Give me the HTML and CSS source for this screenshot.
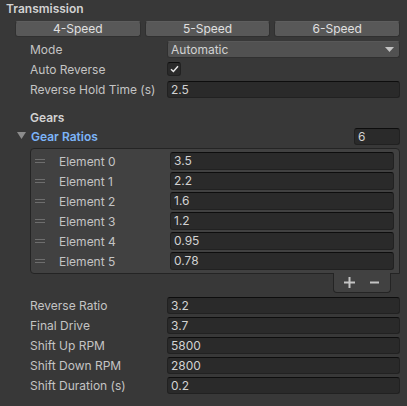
FILE: index.html
```html
<!DOCTYPE html>
<html lang="en">
<head>
    <meta charset="UTF-8">
    <title>Transmission</title>
    <link rel="stylesheet" href="styles.css">
</head>
<body>

<div class="inspector">
    <div class="section-title">Transmission</div>

    <div class="toolbar">
        <button class="tool-btn">4-Speed</button>
        <button class="tool-btn">5-Speed</button>
        <button class="tool-btn">6-Speed</button>
    </div>

    <div class="props-top">
        <div class="prop">
            <span class="label">Mode</span>
            <div class="dropdown">
                <span>Automatic</span>
                <svg class="arrow" width="9" height="5" viewBox="0 0 9 5"><polygon points="0,0 9,0 4.5,5" fill="#c4c4c4"/></svg>
            </div>
        </div>
        <div class="prop">
            <span class="label">Auto Reverse</span>
            <div class="checkbox">
                <svg width="9" height="8" viewBox="0 0 9 8"><polyline points="1,4.2 3.4,6.5 8,1.2" fill="none" stroke="#e6e6e6" stroke-width="1.5"/></svg>
            </div>
        </div>
        <div class="prop">
            <span class="label">Reverse Hold Time (s)</span>
            <div class="field">2.5</div>
        </div>
    </div>

    <div class="sub-title">Gears</div>

    <div class="foldout">
        <svg class="fold-arrow" width="9" height="8" viewBox="0 0 9 8"><polygon points="0,0 9,0 4.5,7" fill="#8c8c8c"/></svg>
        <span class="fold-label">Gear Ratios</span>
        <div class="field size-field">6</div>
    </div>

    <div class="list">
        <div class="list-item"><span class="handle"></span><span class="item-label">Element 0</span><div class="field">3.5</div></div>
        <div class="list-item"><span class="handle"></span><span class="item-label">Element 1</span><div class="field">2.2</div></div>
        <div class="list-item"><span class="handle"></span><span class="item-label">Element 2</span><div class="field">1.6</div></div>
        <div class="list-item"><span class="handle"></span><span class="item-label">Element 3</span><div class="field">1.2</div></div>
        <div class="list-item"><span class="handle"></span><span class="item-label">Element 4</span><div class="field">0.95</div></div>
        <div class="list-item"><span class="handle"></span><span class="item-label">Element 5</span><div class="field">0.78</div></div>
    </div>
    <div class="list-footer">
        <div class="list-footer-box">
            <svg width="11" height="11" viewBox="0 0 11 11"><rect x="0" y="4.5" width="11" height="2" fill="#c4c4c4"/><rect x="4.5" y="0" width="2" height="11" fill="#c4c4c4"/></svg>
            <svg width="9" height="11" viewBox="0 0 9 11"><rect x="0" y="4.5" width="9" height="2" fill="#c4c4c4"/></svg>
        </div>
    </div>

    <div class="props-bottom">
        <div class="prop">
            <span class="label">Reverse Ratio</span>
            <div class="field">3.2</div>
        </div>
        <div class="prop">
            <span class="label">Final Drive</span>
            <div class="field">3.7</div>
        </div>
        <div class="prop">
            <span class="label">Shift Up RPM</span>
            <div class="field">5800</div>
        </div>
        <div class="prop">
            <span class="label">Shift Down RPM</span>
            <div class="field">2800</div>
        </div>
        <div class="prop">
            <span class="label">Shift Duration (s)</span>
            <div class="field">0.2</div>
        </div>
    </div>
</div>

</body>
</html>
```

FILE: styles.css
```css
body {
    margin: 0;
    padding: 0;
    background-color: #383838;
    font-family: Inter, "Noto Sans", sans-serif;
    font-size: 12px;
    color: #c4c4c4;
}
.inspector {
    width: 407px;
}
.section-title {
    height: 18px;
    line-height: 18px;
    padding-left: 6px;
    font-weight: 600;
    color: #d2d2d2;
}
.toolbar {
    display: flex;
    gap: 4px;
    margin-top: 3px;
    padding: 0 7px 0 15px;
}
.tool-btn {
    flex: 1;
    height: 16px;
    padding: 0;
    font-family: inherit;
    font-size: 12px;
    line-height: 14px;
    color: #e0e0e0;
    background-color: #585858;
    border: 1px solid #303030;
    border-top-color: #5e5e5e;
    border-radius: 3px;
}
.props-top {
    margin-top: 2px;
}
.prop {
    display: flex;
    align-items: center;
    height: 20px;
    padding: 0 7px 0 30px;
}
.label {
    width: 137px;
    flex-shrink: 0;
    white-space: nowrap;
}
.field {
    flex: 1;
    box-sizing: border-box;
    height: 17px;
    line-height: 15px;
    padding-left: 3px;
    background-color: #2a2a2a;
    border: 1px solid #212121;
    border-top-color: #0d0d0d;
    border-radius: 3px;
    color: #d2d2d2;
}
.dropdown {
    flex: 1;
    display: flex;
    align-items: center;
    justify-content: space-between;
    box-sizing: border-box;
    height: 17px;
    padding: 0 5px 0 3px;
    background-color: #515151;
    border: 1px solid #303030;
    border-top-color: #585858;
    border-radius: 3px;
    color: #d2d2d2;
}
.checkbox {
    width: 14px;
    height: 14px;
    box-sizing: border-box;
    display: flex;
    align-items: center;
    justify-content: center;
    background-color: #2a2a2a;
    border: 1px solid #212121;
    border-top-color: #0d0d0d;
    border-radius: 3px;
}
.sub-title {
    margin-top: 9px;
    height: 19px;
    line-height: 19px;
    padding-left: 30px;
    font-weight: 600;
    color: #d2d2d2;
}
.foldout {
    display: flex;
    align-items: center;
    height: 18px;
    padding: 0 7px 0 17px;
}
.fold-arrow {
    margin-right: 5px;
}
.fold-label {
    flex: 1;
    color: #7cb4f8;
    font-weight: 600;
}
.size-field {
    flex: none;
    width: 46px;
}
.list {
    margin: 3px 7px 0 30px;
    padding: 2px 5px 2px 0;
    background-color: #414141;
    border: 1px solid #242424;
    border-radius: 4px;
    border-bottom-right-radius: 0;
}
.list-item {
    display: flex;
    align-items: center;
    height: 20px;
}
.handle {
    width: 10px;
    height: 4px;
    margin: 0 14px 0 4px;
    border-top: 1px solid #6e6e6e;
    border-bottom: 1px solid #6e6e6e;
    box-sizing: border-box;
}
.item-label {
    width: 111px;
    flex-shrink: 0;
}
.list .field {
    height: 18px;
    line-height: 16px;
}
.list-footer {
    display: flex;
    justify-content: flex-end;
    padding-right: 16px;
}
.list-footer-box {
    display: flex;
    align-items: center;
    gap: 15px;
    width: 58px;
    height: 20px;
    box-sizing: border-box;
    margin-top: -1px;
    padding-left: 10px;
    background-color: #414141;
    border: 1px solid #242424;
    border-top: none;
    border-radius: 0 0 4px 4px;
}
.props-bottom {
    margin-top: 2px;
}
```
